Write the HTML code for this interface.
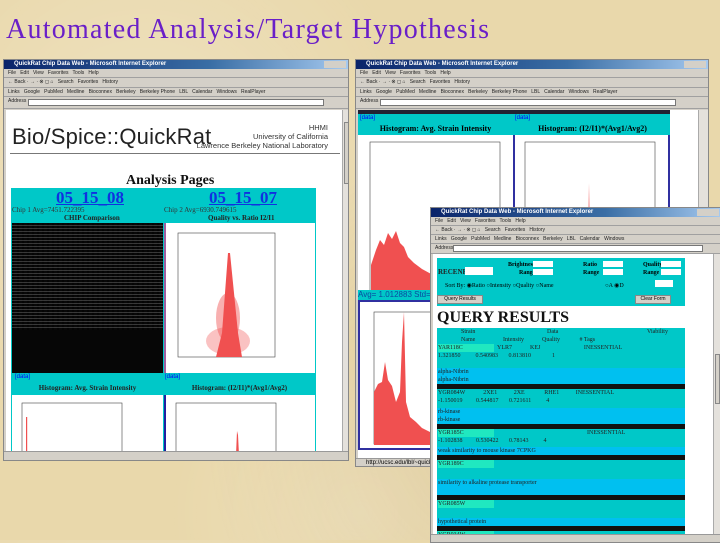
<!DOCTYPE html>
<html><head><meta charset="utf-8">
<style>
*{margin:0;padding:0;box-sizing:border-box}
body{width:720px;height:540px;overflow:hidden;position:relative;background:#e9d8ab;
background-image:radial-gradient(circle at 20% 30%,rgba(255,255,255,.25),transparent 40%),radial-gradient(circle at 70% 80%,rgba(180,150,90,.18),transparent 45%),radial-gradient(circle at 50% 95%,rgba(255,255,255,.2),transparent 30%);
font-family:"Liberation Sans",sans-serif}
.abs{position:absolute}
.title{left:6px;top:14px;font-family:"Liberation Serif",serif;font-size:28px;color:#6a1fc8;letter-spacing:1.25px;white-space:nowrap}
.win{position:absolute;background:#d4d0c8;border:1px solid #888;overflow:hidden}
.tb{position:absolute;left:0;right:0;top:0;height:9px;background:linear-gradient(90deg,#0a246a,#3a6ea5 60%,#a6caf0);color:#fff;font-size:6px;line-height:9px;padding-left:10px;font-weight:bold;white-space:nowrap}
.tb:after{content:"";position:absolute;right:2px;top:1px;width:22px;height:7px;background:#d4d0c8}
.row{position:absolute;left:0;right:0;height:9px;border-bottom:1px solid #a0a0a0;font-size:5px;line-height:9px;color:#222;padding-left:4px;white-space:nowrap;overflow:hidden}
.addr{position:absolute;background:#fff;border:1px solid #777;height:7px}
.cont{position:absolute;background:#fff}
.cyan{background:#00c8c8}
.sb{position:absolute;background:#e4e1dc;border-left:1px solid #aaa}
.thumb{position:absolute;background:#d4d0c8;border:1px solid #888;left:1px;right:1px}
.st{position:absolute;left:0;right:0;height:9px;background:#d4d0c8;border-top:1px solid #999}
.ser{font-family:"Liberation Serif",serif}
</style></head><body>
<div class="abs title">Automated Analysis/Target Hypothesis</div>

<!-- Window 1 -->
<div class="win" style="left:3px;top:59px;width:346px;height:402px">
 <div class="tb">QuickRat Chip Data Web - Microsoft Internet Explorer</div>
 <div class="row" style="top:9px">File &nbsp; Edit &nbsp; View &nbsp; Favorites &nbsp; Tools &nbsp; Help</div>
 <div class="row" style="top:18px;height:10px">← Back · → · ⊗ ◻ ⌂ &nbsp; Search &nbsp; Favorites &nbsp; History</div>
 <div class="row" style="top:28px">Links &nbsp; Google &nbsp; PubMed &nbsp; Medline &nbsp; Bioconnex &nbsp; Berkeley &nbsp; Berkeley Phone &nbsp; LBL &nbsp; Calendar &nbsp; Windows &nbsp; RealPlayer</div>
 <div class="row" style="top:37px;height:12px">Address</div>
 <div class="addr" style="left:24px;top:39px;width:296px"></div>
 <div class="cont" style="left:2px;top:50px;width:336px;height:341px">
  <div class="abs" style="left:6px;top:14px;font-size:22px;color:#222;letter-spacing:0.2px;white-space:nowrap">Bio/Spice::QuickRat</div>
  <div class="abs" style="right:14px;top:13px;font-size:7.5px;color:#333;text-align:right;line-height:9px">HHMI<br>University of California<br>Lawrence Berkeley National Laboratory</div>
  <div class="abs" style="left:4px;top:43px;width:330px;height:1px;background:#777"></div>
  <div class="abs ser" style="left:120px;top:63px;font-size:14px;font-weight:bold;color:#111">Analysis Pages</div>
  <div class="abs cyan" style="left:5px;top:78px;width:305px;height:300px"></div>
  <div class="abs ser" style="left:50px;top:78px;font-size:17px;font-weight:bold;color:#1030e0;text-decoration:underline">05_15_08</div>
  <div class="abs ser" style="left:203px;top:78px;font-size:17px;font-weight:bold;color:#1030e0;text-decoration:underline">05_15_07</div>
  <div class="abs ser" style="left:6px;top:96px;font-size:7px;color:#333">Chip 1 Avg=7451.722395</div>
  <div class="abs ser" style="left:158px;top:96px;font-size:7px;color:#333">Chip 2 Avg=6930.749615</div>
  <div class="abs ser" style="left:58px;top:104px;font-size:7px;font-weight:bold;color:#222">CHIP Comparison</div>
  <div class="abs ser" style="left:202px;top:104px;font-size:7px;font-weight:bold;color:#222">Quality vs. Ratio I2/I1</div>
  <div class="abs" style="left:6px;top:113px;width:151px;height:150px;background:#080808;background-image:repeating-linear-gradient(0deg,rgba(170,170,170,.3) 0 1px,transparent 1px 3px),repeating-linear-gradient(90deg,rgba(0,0,0,.5) 0 2px,transparent 2px 5px)"></div>
  <div class="abs" style="left:6px;top:220px;width:151px;height:43px;background:#060606"></div>
  <div class="abs" style="left:158px;top:113px;width:151px;height:150px;background:#fff;border-left:2px solid #a060a0">
   <svg width="150" height="150" class="abs" style="left:0;top:0">
    <rect x="12" y="10" width="97" height="124" fill="none" stroke="#444" stroke-width="0.6"/>
    <path d="M62 30 L64 30 L68 70 L72 110 L76 134 L50 134 L56 110 L59 70 Z" fill="#f05050"/>
    <ellipse cx="62" cy="118" rx="22" ry="14" fill="#f05050" opacity=".35"/>
    <ellipse cx="62" cy="95" rx="12" ry="25" fill="#f05050" opacity=".45"/>
   </svg>
  </div>
  <div class="abs" style="left:6px;top:264px;width:303px;height:10px;font-size:6px;color:#00f;padding-left:3px">[data] <span style="position:absolute;left:153px">[data]</span></div>
  <div class="abs ser" style="left:6px;top:274px;width:151px;height:10px;font-size:7px;font-weight:bold;text-align:center;color:#222">Histogram: Avg. Strain Intensity</div>
  <div class="abs ser" style="left:158px;top:274px;width:151px;height:10px;font-size:7px;font-weight:bold;text-align:center;color:#222">Histogram: (I2/I1)*(Avg1/Avg2)</div>
  <div class="abs" style="left:6px;top:285px;width:151px;height:56px;background:#fff">
   <svg width="151" height="56"><rect x="10" y="8" width="100" height="60" fill="none" stroke="#444" stroke-width="0.6"/><rect x="14" y="22" width="1.2" height="40" fill="#f05050"/></svg>
  </div>
  <div class="abs" style="left:158px;top:285px;width:151px;height:56px;background:#fff;border-left:2px solid #2020a0">
   <svg width="151" height="56"><rect x="10" y="8" width="100" height="60" fill="none" stroke="#444" stroke-width="0.6"/><path d="M70 60 L71 36 L72 40 L73 60Z" fill="#f05050"/></svg>
  </div>
 </div>
 <div class="sb" style="left:338px;top:50px;width:8px;height:341px"><div class="thumb" style="top:12px;height:62px"></div></div>
 <div class="st" style="top:391px"></div>
</div>

<!-- Window 2 -->
<div class="win" style="left:355px;top:59px;width:354px;height:408px">
 <div class="tb">QuickRat Chip Data Web - Microsoft Internet Explorer</div>
 <div class="row" style="top:9px">File &nbsp; Edit &nbsp; View &nbsp; Favorites &nbsp; Tools &nbsp; Help</div>
 <div class="row" style="top:18px;height:10px">← Back · → · ⊗ ◻ ⌂ &nbsp; Search &nbsp; Favorites &nbsp; History</div>
 <div class="row" style="top:28px">Links &nbsp; Google &nbsp; PubMed &nbsp; Medline &nbsp; Bioconnex &nbsp; Berkeley &nbsp; Berkeley Phone &nbsp; LBL &nbsp; Calendar &nbsp; Windows &nbsp; RealPlayer</div>
 <div class="row" style="top:37px;height:12px">Address</div>
 <div class="addr" style="left:24px;top:39px;width:296px"></div>
 <div class="cont" style="left:2px;top:50px;width:340px;height:348px">
  <div class="abs" style="left:0;top:0;width:312px;height:4px;background:#223"></div>
  <div class="abs cyan" style="left:0;top:4px;width:312px;height:21px"></div>
  <div class="abs" style="left:2px;top:5px;font-size:6px;color:#00f">[data]</div>
  <div class="abs" style="left:157px;top:5px;font-size:6px;color:#00f">[data]</div>
  <div class="abs ser" style="left:0;top:14px;width:155px;font-size:8px;font-weight:bold;text-align:center">Histogram: Avg. Strain Intensity</div>
  <div class="abs ser" style="left:157px;top:14px;width:155px;font-size:8px;font-weight:bold;text-align:center">Histogram: (I2/I1)*(Avg1/Avg2)</div>
  <div class="abs" style="left:155px;top:25px;width:2px;height:155px;background:#3030a0"></div>
  <div class="abs" style="left:310px;top:25px;width:2px;height:155px;background:#3030a0"></div>
  <svg class="abs" style="left:0;top:25px" width="155" height="160">
   <rect x="12" y="7" width="130" height="150" fill="none" stroke="#444" stroke-width="0.6"/>
   <path d="M13 155 L13 130 L18 115 L22 105 L26 110 L30 98 L34 104 L38 96 L42 108 L46 112 L50 122 L56 128 L64 134 L75 140 L90 146 L110 150 L142 153 L142 156 L13 156Z" fill="#f05050"/>
  </svg>
  <svg class="abs" style="left:157px;top:25px" width="153" height="160">
   <rect x="10" y="7" width="130" height="150" fill="none" stroke="#444" stroke-width="0.6"/>
   <path d="M72 150 L73 110 L74 48 L75 110 L76 150Z" fill="#f05050"/>
  </svg>
  <div class="abs cyan" style="left:0;top:180px;width:80px;height:10px;font-size:8px;color:#0a4aa0;white-space:nowrap;overflow:hidden">Avg= 1.012883 Std=0.65</div>
  <div class="abs" style="left:0;top:190px;width:80px;height:150px;border:2px solid #3030a0;border-right:none;background:#fff">
   <svg width="80" height="150"><rect x="14" y="10" width="70" height="132" fill="none" stroke="#444" stroke-width="0.6"/>
   <path d="M14 142 L14 90 L18 82 L22 80 L25 60 L28 78 L32 84 L36 100 L40 90 L42 40 L44 10 L46 100 L50 115 L56 120 L62 126 L70 130 L80 134 L80 143 L14 143Z" fill="#f05050"/></svg>
  </div>
 </div>
 <div class="sb" style="left:342px;top:50px;width:10px;height:348px"><div class="thumb" style="top:120px;height:90px"></div></div>
 <div class="st" style="top:398px;font-size:6px;padding-left:10px;line-height:9px">http://ucsc.edu/lbl/~quickrat</div>
</div>

<!-- Window 3 -->
<div class="win" style="left:430px;top:207px;width:292px;height:336px">
 <div class="tb">QuickRat Chip Data Web - Microsoft Internet Explorer</div>
 <div class="row" style="top:9px">File &nbsp; Edit &nbsp; View &nbsp; Favorites &nbsp; Tools &nbsp; Help</div>
 <div class="row" style="top:18px">← Back · → · ⊗ ◻ ⌂ &nbsp; Search &nbsp; Favorites &nbsp; History</div>
 <div class="row" style="top:27px">Links &nbsp; Google &nbsp; PubMed &nbsp; Medline &nbsp; Bioconnex &nbsp; Berkeley &nbsp; LBL &nbsp; Calendar &nbsp; Windows</div>
 <div class="row" style="top:36px;height:10px">Address</div>
 <div class="addr" style="left:22px;top:37px;width:250px"></div>
 <div class="cont" style="left:2px;top:46px;width:280px;height:280px">
  <div class="abs cyan" style="left:4px;top:4px;width:248px;height:48px;font-size:6px"></div>
  <div class="abs ser" style="left:5px;top:14px;font-size:7px;font-weight:bold;color:#222">RECENR</div>
  <div class="abs" style="left:32px;top:13px;width:28px;height:8px;background:#fff"></div>
  <div class="abs ser" style="left:75px;top:7px;font-size:6px;font-weight:bold;text-align:right;line-height:8px">Brightness<br>Range</div>
  <div class="abs" style="left:100px;top:7px;width:20px;height:6px;background:#fff"></div><div class="abs" style="left:100px;top:15px;width:20px;height:6px;background:#fff"></div>
  <div class="abs ser" style="left:150px;top:7px;font-size:6px;font-weight:bold;line-height:8px">Ratio<br>Range</div>
  <div class="abs" style="left:170px;top:7px;width:20px;height:6px;background:#fff"></div><div class="abs" style="left:170px;top:15px;width:20px;height:6px;background:#fff"></div>
  <div class="abs ser" style="left:210px;top:7px;font-size:6px;font-weight:bold;line-height:8px">Quality<br>Range</div>
  <div class="abs" style="left:228px;top:7px;width:20px;height:6px;background:#fff"></div><div class="abs" style="left:228px;top:15px;width:20px;height:6px;background:#fff"></div>
  <div class="abs ser" style="left:12px;top:28px;font-size:6px">Sort By: ◉Ratio ○Intensity ○Quality ○Name</div>
  <div class="abs ser" style="left:172px;top:28px;font-size:6px">○A ◉D</div>
  <div class="abs" style="left:222px;top:26px;width:18px;height:7px;background:#fff"></div>
  <div class="abs" style="left:4px;top:41px;width:46px;height:9px;background:#d4d0c8;border:1px solid #888;font-size:5px;text-align:center">Query Results</div>
  <div class="abs" style="left:202px;top:41px;width:36px;height:9px;background:#d4d0c8;border:1px solid #888;font-size:5px;text-align:center">Clear Form</div>
  <div class="abs ser" style="left:4px;top:55px;font-size:16px;font-weight:bold;color:#111">QUERY RESULTS</div>
  <div class="abs cyan" style="left:4px;top:74px;width:248px;height:210px;background:
   linear-gradient(#00c8c8 0 40px,#00c0f0 40px 56px,#111 56px 61px,#00c8c8 61px 80px,#00c0f0 80px 96px,#111 96px 101px,#00c8c8 101px 119px,#00c0f0 119px 127px,#111 127px 132px,#00c8c8 132px 151px,#00c0f0 151px 167px,#111 167px 172px,#00c8c8 172px 190px,#00c0f0 190px 198px,#111 198px 203px,#00c8c8 203px)"></div>
  <div class="abs ser" style="left:4px;top:74px;width:248px;font-size:6px;color:#222;line-height:8px">
   <div style="position:absolute;left:24px;top:0">Strain<br>Name</div>
   <div style="position:absolute;left:110px;top:0">Data</div>
   <div style="position:absolute;left:66px;top:8px;white-space:nowrap">Intensity &nbsp;&nbsp;&nbsp;&nbsp;&nbsp;&nbsp;&nbsp;&nbsp;&nbsp;&nbsp; Quality &nbsp;&nbsp;&nbsp;&nbsp;&nbsp;&nbsp;&nbsp;&nbsp;&nbsp;&nbsp;&nbsp; # Tags</div>
   <div style="position:absolute;left:210px;top:0">Viability</div>
   <div style="position:absolute;left:1px;top:16px;width:56px;background:#20e8c0">YAR118C</div>
   <div style="position:absolute;left:60px;top:16px;white-space:nowrap">YLR7 &nbsp;&nbsp;&nbsp;&nbsp;&nbsp;&nbsp;&nbsp;&nbsp;&nbsp;&nbsp; KEJ &nbsp;&nbsp;&nbsp;&nbsp;&nbsp;&nbsp;&nbsp;&nbsp;&nbsp;&nbsp;&nbsp;&nbsp;&nbsp;&nbsp;&nbsp;&nbsp;&nbsp;&nbsp;&nbsp;&nbsp;&nbsp;&nbsp;&nbsp;&nbsp;&nbsp;&nbsp;&nbsp; INESSENTIAL</div>
   <div style="position:absolute;left:1px;top:24px;white-space:nowrap">1.321850 &nbsp;&nbsp;&nbsp;&nbsp;&nbsp;&nbsp;&nbsp;&nbsp; 0.540983 &nbsp;&nbsp;&nbsp;&nbsp;&nbsp; 0.813810 &nbsp;&nbsp;&nbsp;&nbsp;&nbsp;&nbsp;&nbsp;&nbsp;&nbsp;&nbsp;&nbsp;&nbsp; 1</div>
   <div style="position:absolute;left:1px;top:40px">alpha-Nibrin<br>alpha-Nibrin</div>
   <div style="position:absolute;left:1px;top:61px;white-space:nowrap">YGR084W &nbsp;&nbsp;&nbsp;&nbsp;&nbsp;&nbsp;&nbsp;&nbsp;&nbsp;&nbsp; 2XE1 &nbsp;&nbsp;&nbsp;&nbsp;&nbsp;&nbsp;&nbsp;&nbsp;&nbsp; 2XE &nbsp;&nbsp;&nbsp;&nbsp;&nbsp;&nbsp;&nbsp;&nbsp;&nbsp;&nbsp;&nbsp; RHE1 &nbsp;&nbsp;&nbsp;&nbsp;&nbsp;&nbsp;&nbsp;&nbsp;&nbsp; INESSENTIAL</div>
   <div style="position:absolute;left:1px;top:69px;white-space:nowrap">-1.150019 &nbsp;&nbsp;&nbsp;&nbsp;&nbsp;&nbsp;&nbsp; 0.544817 &nbsp;&nbsp;&nbsp;&nbsp;&nbsp; 0.721611 &nbsp;&nbsp;&nbsp;&nbsp;&nbsp;&nbsp;&nbsp;&nbsp; 4</div>
   <div style="position:absolute;left:1px;top:80px">rb-kinase<br>rb-kinase</div>
   <div style="position:absolute;left:1px;top:101px;width:56px;background:#20e8c0">YGR185C</div>
   <div style="position:absolute;left:150px;top:101px">INESSENTIAL</div>
   <div style="position:absolute;left:1px;top:109px;white-space:nowrap">-1.102838 &nbsp;&nbsp;&nbsp;&nbsp;&nbsp;&nbsp;&nbsp; 0.530422 &nbsp;&nbsp;&nbsp;&nbsp;&nbsp; 0.78143 &nbsp;&nbsp;&nbsp;&nbsp;&nbsp;&nbsp;&nbsp;&nbsp; 4</div>
   <div style="position:absolute;left:1px;top:119px;white-space:nowrap">weak similarity to mouse kinase 7CPKG</div>
   <div style="position:absolute;left:1px;top:132px;width:56px;background:#20e8c0">YGR189C</div>
   <div style="position:absolute;left:1px;top:151px;white-space:nowrap">similarity to alkaline protease transporter</div>
   <div style="position:absolute;left:1px;top:172px;width:56px;background:#20e8c0">YGR085W</div>
   <div style="position:absolute;left:1px;top:190px">hypothetical protein</div>
   <div style="position:absolute;left:1px;top:203px;width:56px;background:#20e8c0">YGR034W</div>
  </div>
 </div>
 <div class="sb" style="left:282px;top:46px;width:8px;height:280px"><div class="thumb" style="top:100px;height:50px"></div></div>
 <div class="st" style="top:326px"></div>
</div>
</body></html>
